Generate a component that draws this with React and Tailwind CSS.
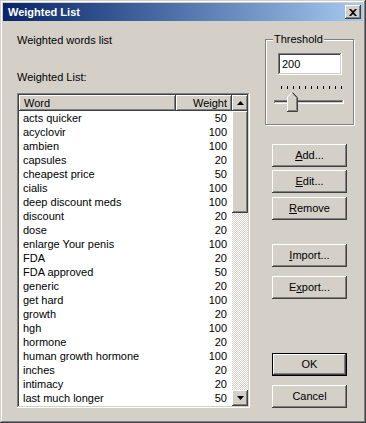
import React from 'react'

const ROWS = [
  ['acts quicker', 50],
  ['acyclovir', 100],
  ['ambien', 100],
  ['capsules', 20],
  ['cheapest price', 50],
  ['cialis', 100],
  ['deep discount meds', 100],
  ['discount', 20],
  ['dose', 20],
  ['enlarge Your penis', 100],
  ['FDA', 20],
  ['FDA approved', 50],
  ['generic', 20],
  ['get hard', 100],
  ['growth', 20],
  ['hgh', 100],
  ['hormone', 20],
  ['human growth hormone', 100],
  ['inches', 20],
  ['intimacy', 20],
  ['last much longer', 50],
]

const raised = 'shadow-[inset_-1px_-1px_#404040,inset_1px_1px_#fff,inset_-2px_-2px_#808080,inset_2px_2px_#d4d0c8]'
const sunken = 'shadow-[inset_-1px_-1px_#fff,inset_1px_1px_#808080,inset_-2px_-2px_#d4d0c8,inset_2px_2px_#404040]'

function Button({ children, isDefault, className = '' }) {
  if (isDefault) {
    return (
      <div className={`h-[23px] w-[75px] border border-black ${className}`}>
        <div className={`h-full w-full flex items-center justify-center bg-[#d4d0c8] ${raised}`}>{children}</div>
      </div>
    )
  }
  return (
    <div className={`h-[23px] w-[75px] flex items-center justify-center bg-[#d4d0c8] ${raised} ${className}`}>
      {children}
    </div>
  )
}

function Arrow({ down }) {
  return (
    <div className={`h-[16px] w-[16px] flex items-center justify-center bg-[#d4d0c8] ${raised}`}>
      <svg width="7" height="4" viewBox="0 0 7 4">
        {down ? <polygon points="0,0 7,0 3.5,4" fill="#000" /> : <polygon points="3.5,0 7,4 0,4" fill="#000" />}
      </svg>
    </div>
  )
}

export default function App() {
  return (
    <div className="w-[366px] h-[423px] bg-[#d4d0c8] p-[3px] flex flex-col font-['Liberation_Sans',Arial,sans-serif] text-[11px] text-black shadow-[inset_-1px_-1px_#404040,inset_1px_1px_#d4d0c8,inset_-2px_-2px_#808080,inset_2px_2px_#fff]">
      {/* title bar */}
      <div className="h-[18px] flex items-center justify-between bg-gradient-to-r from-[#0a246a] to-[#a6caf0] pl-[5px] pr-[2px]">
        <span className="text-white font-bold leading-none">Weighted List</span>
        <div className={`h-[14px] w-[16px] flex items-center justify-center bg-[#d4d0c8] ${raised}`}>
          <svg width="8" height="7" viewBox="0 0 8 7">
            <path d="M0 0h2l2 2 2-2h2L5 3.5 8 7H6L4 5 2 7H0l3-3.5z" fill="#000" />
          </svg>
        </div>
      </div>

      <div className="flex">
        {/* left column */}
        <div className="ml-[14px] w-[233px] flex flex-col">
          <div className="mt-[13px] leading-[13px]">Weighted words list</div>
          <div className="mt-[24px] leading-[13px]">Weighted List:</div>
          <div className={`mt-[9px] h-[315px] p-[2px] bg-white flex ${sunken}`}>
            <div className="flex-1 flex flex-col">
              <div className="h-[16px] flex">
                <div className={`w-[157px] pl-[5px] leading-[16px] bg-[#d4d0c8] ${raised}`}>Word</div>
                <div className={`flex-1 pr-[5px] text-right leading-[16px] bg-[#d4d0c8] ${raised}`}>Weight</div>
              </div>
              {ROWS.map(([w, n]) => (
                <div key={w} className="h-[14px] leading-[14px] flex">
                  <div className="w-[157px] pl-[4px]">{w}</div>
                  <div className="flex-1 pr-[5px] text-right">{n}</div>
                </div>
              ))}
            </div>
            <div className="w-[16px] flex flex-col">
              <Arrow />
              <div className={`h-[102px] bg-[#d4d0c8] ${raised}`} />
              <div className="flex-1 bg-[image:repeating-conic-gradient(#fff_0_25%,#d4d0c8_0_50%)] bg-[length:2px_2px]" />
              <Arrow down />
            </div>
          </div>
        </div>

        {/* right column */}
        <div className="ml-[15px] w-[90px] flex flex-col">
          <div className="relative mt-[18px] h-[86px] w-[89px] border border-[#808080] shadow-[inset_1px_1px_#fff,1px_1px_#fff]">
            <span className="absolute -top-[7px] left-[7px] px-[1px] bg-[#d4d0c8] leading-[13px]">Threshold</span>
            <div className={`mt-[13px] ml-[12px] h-[22px] w-[64px] bg-white pl-[4px] leading-[22px] ${sunken}`}>200</div>
            <div className="mt-[11px] ml-[15px] h-[3px] flex gap-[5px]">
              {Array.from({ length: 11 }).map((_, i) => (
                <div key={i} className="w-[1px] h-[3px] bg-black" />
              ))}
            </div>
            <div className="relative mt-[3px] h-[20px]">
              <div className={`absolute top-[8px] left-[8px] h-[4px] w-[70px] ${sunken}`} />
              <svg className="absolute top-0 left-[21px]" width="11" height="20" viewBox="0 0 11 20">
                <polygon points="0,5 5,0 10,5 10,19 0,19" fill="#d4d0c8" />
                <polyline points="0.5,19 0.5,5 5,0.5" fill="none" stroke="#fff" />
                <polyline points="5.5,0.5 10.5,5.5 10.5,19.5 0,19.5" fill="none" stroke="#404040" />
                <polyline points="5.5,1.5 9.5,5.5 9.5,18.5 1,18.5" fill="none" stroke="#808080" />
              </svg>
            </div>
          </div>

          <Button className="mt-[19px] ml-[7px]"><span><u>A</u>dd...</span></Button>
          <Button className="mt-[3px] ml-[7px]"><span><u>E</u>dit...</span></Button>
          <Button className="mt-[4px] ml-[7px]"><span><u>R</u>emove</span></Button>
          <Button className="mt-[24px] ml-[7px]"><span><u>I</u>mport...</span></Button>
          <Button className="mt-[9px] ml-[7px]"><span>E<u>x</u>port...</span></Button>
          <Button isDefault className="mt-[54px] ml-[7px]"><span>OK</span></Button>
          <Button className="mt-[9px] ml-[7px]"><span>Cancel</span></Button>
        </div>
      </div>
    </div>
  )
}
